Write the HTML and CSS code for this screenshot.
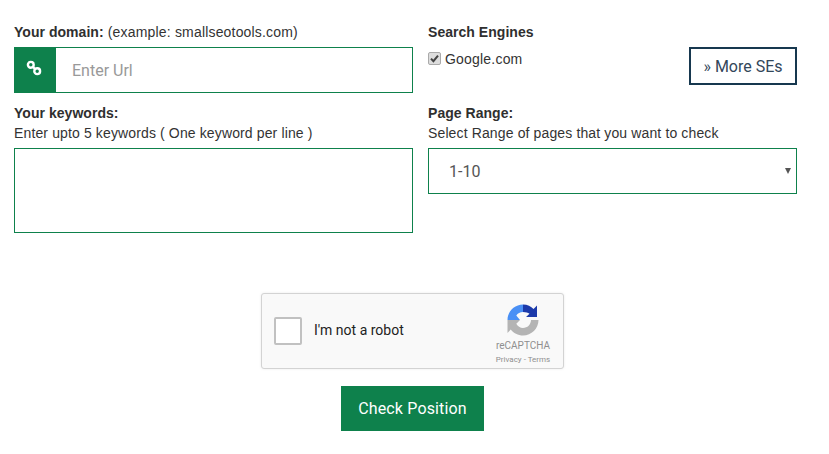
FILE: index.html
```html
<!DOCTYPE html>
<html lang="en">
<head>
  <meta charset="UTF-8">
  <meta name="viewport" content="width=device-width, initial-scale=1.0">
  <title>Keyword Position Checker</title>
  <link rel="stylesheet" href="styles.css">
</head>
<body>
  <form class="checker-form">
    <div class="fields">
      <div class="field">
        <label class="field-label"><b>Your domain:</b> (example: smallseotools.com)</label>
        <div class="url-group">
          <span class="url-icon">
            <svg width="18" height="18" viewBox="0 0 18 18">
              <circle cx="5.800" cy="5.800" r="2.900" fill="none" stroke="#fff" stroke-width="2.400"/>
              <circle cx="12.200" cy="12.200" r="2.900" fill="none" stroke="#fff" stroke-width="2.400"/>
              <path d="M7.500 7.500l3 3" stroke="#fff" stroke-width="2.400"/>
            </svg>
          </span>
          <input class="url-input" type="text" placeholder="Enter Url">
        </div>
      </div>

      <div class="field">
        <label class="field-label"><b>Search Engines</b></label>
        <div class="engines">
          <label class="engine-option">
            <span class="fake-check">
              <svg width="9" height="9" viewBox="0 0 9 9"><path d="M1 4.600l2.400 2.600L8 1.600" fill="none" stroke="#444" stroke-width="2"/></svg>
            </span>
            Google.com
          </label>
          <button class="more-button" type="button">» More SEs</button>
        </div>
      </div>

      <div class="field">
        <label class="field-label"><b>Your keywords:</b></label>
        <div class="field-hint">Enter upto 5 keywords ( One keyword per line )</div>
        <textarea class="keywords"></textarea>
      </div>

      <div class="field">
        <label class="field-label"><b>Page Range:</b></label>
        <div class="field-hint">Select Range of pages that you want to check</div>
        <div class="select-wrap">
          <select class="range-select">
            <option>1-10</option>
            <option>1-20</option>
            <option>1-50</option>
          </select>
        </div>
      </div>
    </div>

    <div class="captcha">
      <span class="captcha-box"></span>
      <span class="captcha-text">I'm not a robot</span>
      <div class="captcha-brand">
        <svg class="captcha-logo" width="32" height="32" viewBox="0 0 32 32">
          <path d="M.5 16C.5 7.500 7.500 .5 16 .5V8c-3 0-5.300 1.400-6.700 3.500L13 16z" fill="#4a90f5"/>
          <path d="M16 .5c4.500 0 8 1.800 10.500 4.500L30 1.500V13H19l3.500-3.200C21 8.800 18.800 8 16 8z" fill="#1c3aaa"/>
          <path d="M31.500 16c0 8.500-7 15.500-15.500 15.500-5 0-9.500-2.400-12.300-6L.5 29V16H13l-3.700 3.700c1.400 2.300 3.900 4.300 6.700 4.300 4.400 0 8-3.600 8-8z" fill="#b4b4b4"/>
        </svg>
        <div class="captcha-name">reCAPTCHA</div>
        <div class="captcha-links">Privacy - Terms</div>
      </div>
    </div>

    <div class="submit-row">
      <button class="check-button" type="button">Check Position</button>
    </div>
  </form>
</body>
</html>
```

FILE: styles.css
```css
body {
  margin: 0;
  background-color: #fff;
  color: #333;
  font-family: "Liberation Sans", Arial, sans-serif;
  font-size: 14px;
  overflow: hidden;
}

.checker-form {
  padding: 24px 18px 0 14px;
}

.fields {
  display: grid;
  grid-template-columns: 399px 369px;
  column-gap: 15px;
  row-gap: 12px;
}

.field-label {
  display: block;
  height: 16px;
  line-height: 16px;
  letter-spacing: 0.18px;
}

.field-label b {
  color: #2f2f2f;
  letter-spacing: 0.04px;
}

.field-hint {
  height: 16px;
  margin-top: 4px;
  line-height: 16px;
  letter-spacing: 0.13px;
}

.url-group {
  display: flex;
  height: 46px;
  margin-top: 7px;
  box-sizing: border-box;
  border: 1px solid #0e814c;
}

.url-icon {
  display: flex;
  justify-content: center;
  width: 41px;
  padding: 11px 4px 0 0;
  box-sizing: border-box;
  background-color: #0e814c;
}

.url-input {
  flex: 1;
  min-width: 0;
  padding: 0 16px;
  border: none;
  outline: none;
  font-family: Roboto, sans-serif;
  font-size: 16px;
}

.url-input::placeholder {
  color: #999;
}

.engines {
  display: flex;
  justify-content: space-between;
  height: 38px;
  margin-top: 7px;
}

.engine-option {
  display: flex;
  align-items: center;
  gap: 4px;
  height: 24px;
  letter-spacing: 0.2px;
}

.fake-check {
  display: flex;
  justify-content: center;
  align-items: center;
  width: 11px;
  height: 11px;
  margin-top: -2px;
  border: 1px solid #aaa;
  border-radius: 2px;
  background-color: #ddd;
}

.more-button {
  width: 108px;
  height: 38px;
  padding: 0;
  border: 2px solid #17384f;
  background-color: #fff;
  color: #33475a;
  font-family: Roboto, sans-serif;
  font-size: 16px;
}

.keywords {
  display: block;
  width: 100%;
  height: 85px;
  margin-top: 7px;
  padding: 8px;
  box-sizing: border-box;
  border: 1px solid #0e814c;
  outline: none;
  resize: none;
}

.select-wrap {
  position: relative;
  margin-top: 7px;
}

.select-wrap::after {
  content: "";
  position: absolute;
  top: 20px;
  right: 6px;
  border-top: 6px solid #555;
  border-left: 3px solid transparent;
  border-right: 3px solid transparent;
}

.range-select {
  display: block;
  width: 100%;
  height: 46px;
  padding: 1px 20px 0;
  box-sizing: border-box;
  border: 1px solid #0e814c;
  border-radius: 0;
  outline: none;
  appearance: none;
  background-color: #fff;
  color: #555;
  font-family: Roboto, sans-serif;
  font-size: 16px;
}

.captcha {
  display: flex;
  align-items: center;
  width: 303px;
  height: 76px;
  margin: 60px auto 0;
  box-sizing: border-box;
  border: 1px solid #d3d3d3;
  border-radius: 3px;
  background-color: #f9f9f9;
  box-shadow: 0 0 3px rgba(0, 0, 0, 0.08);
}

.captcha-box {
  width: 28px;
  height: 28px;
  margin-left: 12px;
  box-sizing: border-box;
  border: 2px solid #c1c1c1;
  border-radius: 2px;
  background-color: #fff;
}

.captcha-text {
  margin: -2px 0 0 12px;
  color: #222;
  font-family: Roboto, sans-serif;
  font-size: 14px;
}

.captcha-brand {
  display: flex;
  flex-direction: column;
  align-items: center;
  width: 60px;
  margin: 8px 10px 0 auto;
  color: #8f8f8f;
  font-family: Roboto, sans-serif;
}

.captcha-name {
  margin-top: 3px;
  font-size: 10px;
  line-height: 14px;
}

.captcha-links {
  font-size: 8px;
  line-height: 14px;
}

.submit-row {
  display: flex;
  justify-content: center;
  margin-top: 17px;
}

.check-button {
  width: 143px;
  height: 45px;
  padding: 0;
  border: none;
  background-color: #0e814c;
  color: #fff;
  font-family: Roboto, sans-serif;
  font-size: 16px;
  letter-spacing: 0.15px;
}
```
